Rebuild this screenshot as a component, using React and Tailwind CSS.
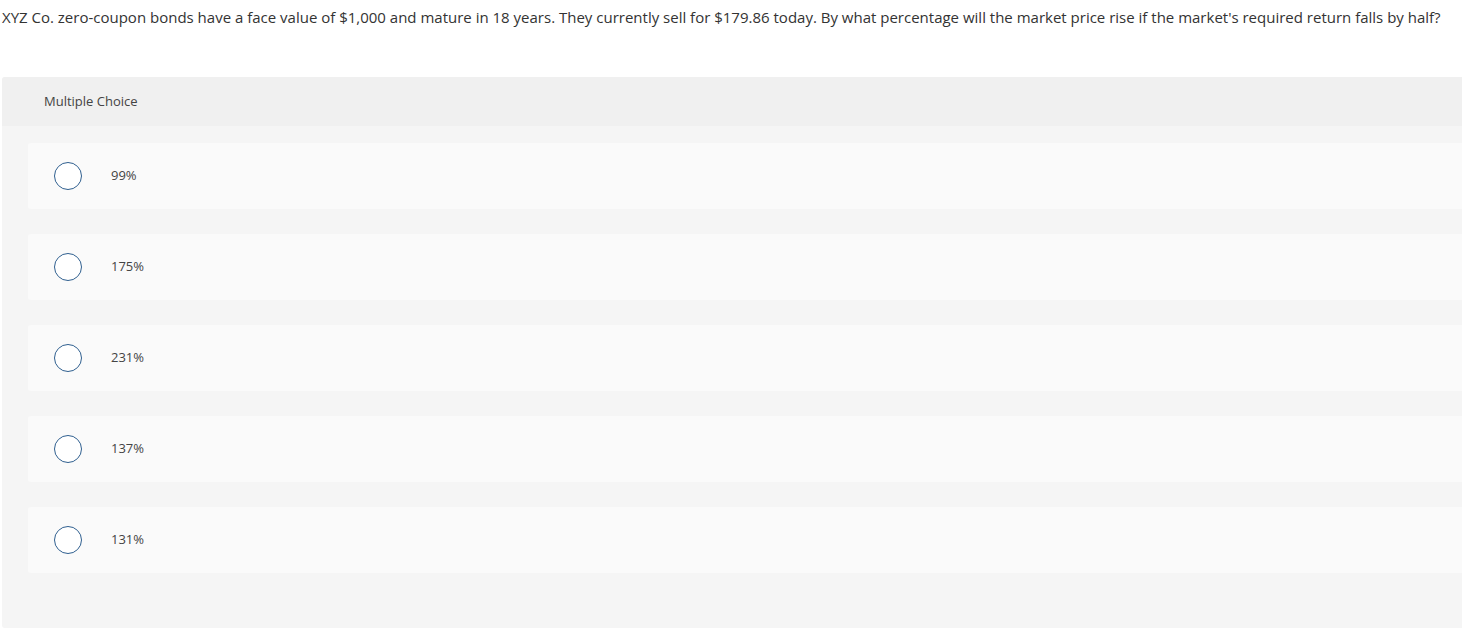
const options = ['99%', '175%', '231%', '137%', '131%'];

function Option({ label }) {
  return (
    <div className="flex h-[66px] items-center bg-[#fafafa] pl-[26px] rounded-l-[3px]">
      <span className="block h-[28px] w-[28px] rounded-full border-[1.5px] border-[#2f5f8f] bg-white" />
      <span className="ml-[29px] text-[13px] text-[#444]">{label}</span>
    </div>
  );
}

export default function App() {
  return (
    <div className="min-h-screen bg-white text-[#333]" style={{ fontFamily: '"Open Sans", "Liberation Sans", sans-serif' }}>
      <p className="pl-[2px] pt-[6px] text-[15px] leading-[22px] text-[#333]">
        XYZ Co. zero-coupon bonds have a face value of $1,000 and mature in 18 years. They currently sell for $179.86 today. By what percentage will the market price rise if the market's required return falls by half?
      </p>
      <div className="ml-[2px] mt-[49px] h-[551px] rounded-l-[3px] bg-[#f5f5f5]">
        <div className="flex h-[49px] items-center bg-[#f0f0f0] pl-[42px] text-[13px] text-[#444] rounded-tl-[3px]">
          Multiple Choice
        </div>
        <div className="flex flex-col gap-[25px] pl-[26px] pt-[17px]">
          {options.map((o) => (
            <Option key={o} label={o} />
          ))}
        </div>
      </div>
    </div>
  );
}
